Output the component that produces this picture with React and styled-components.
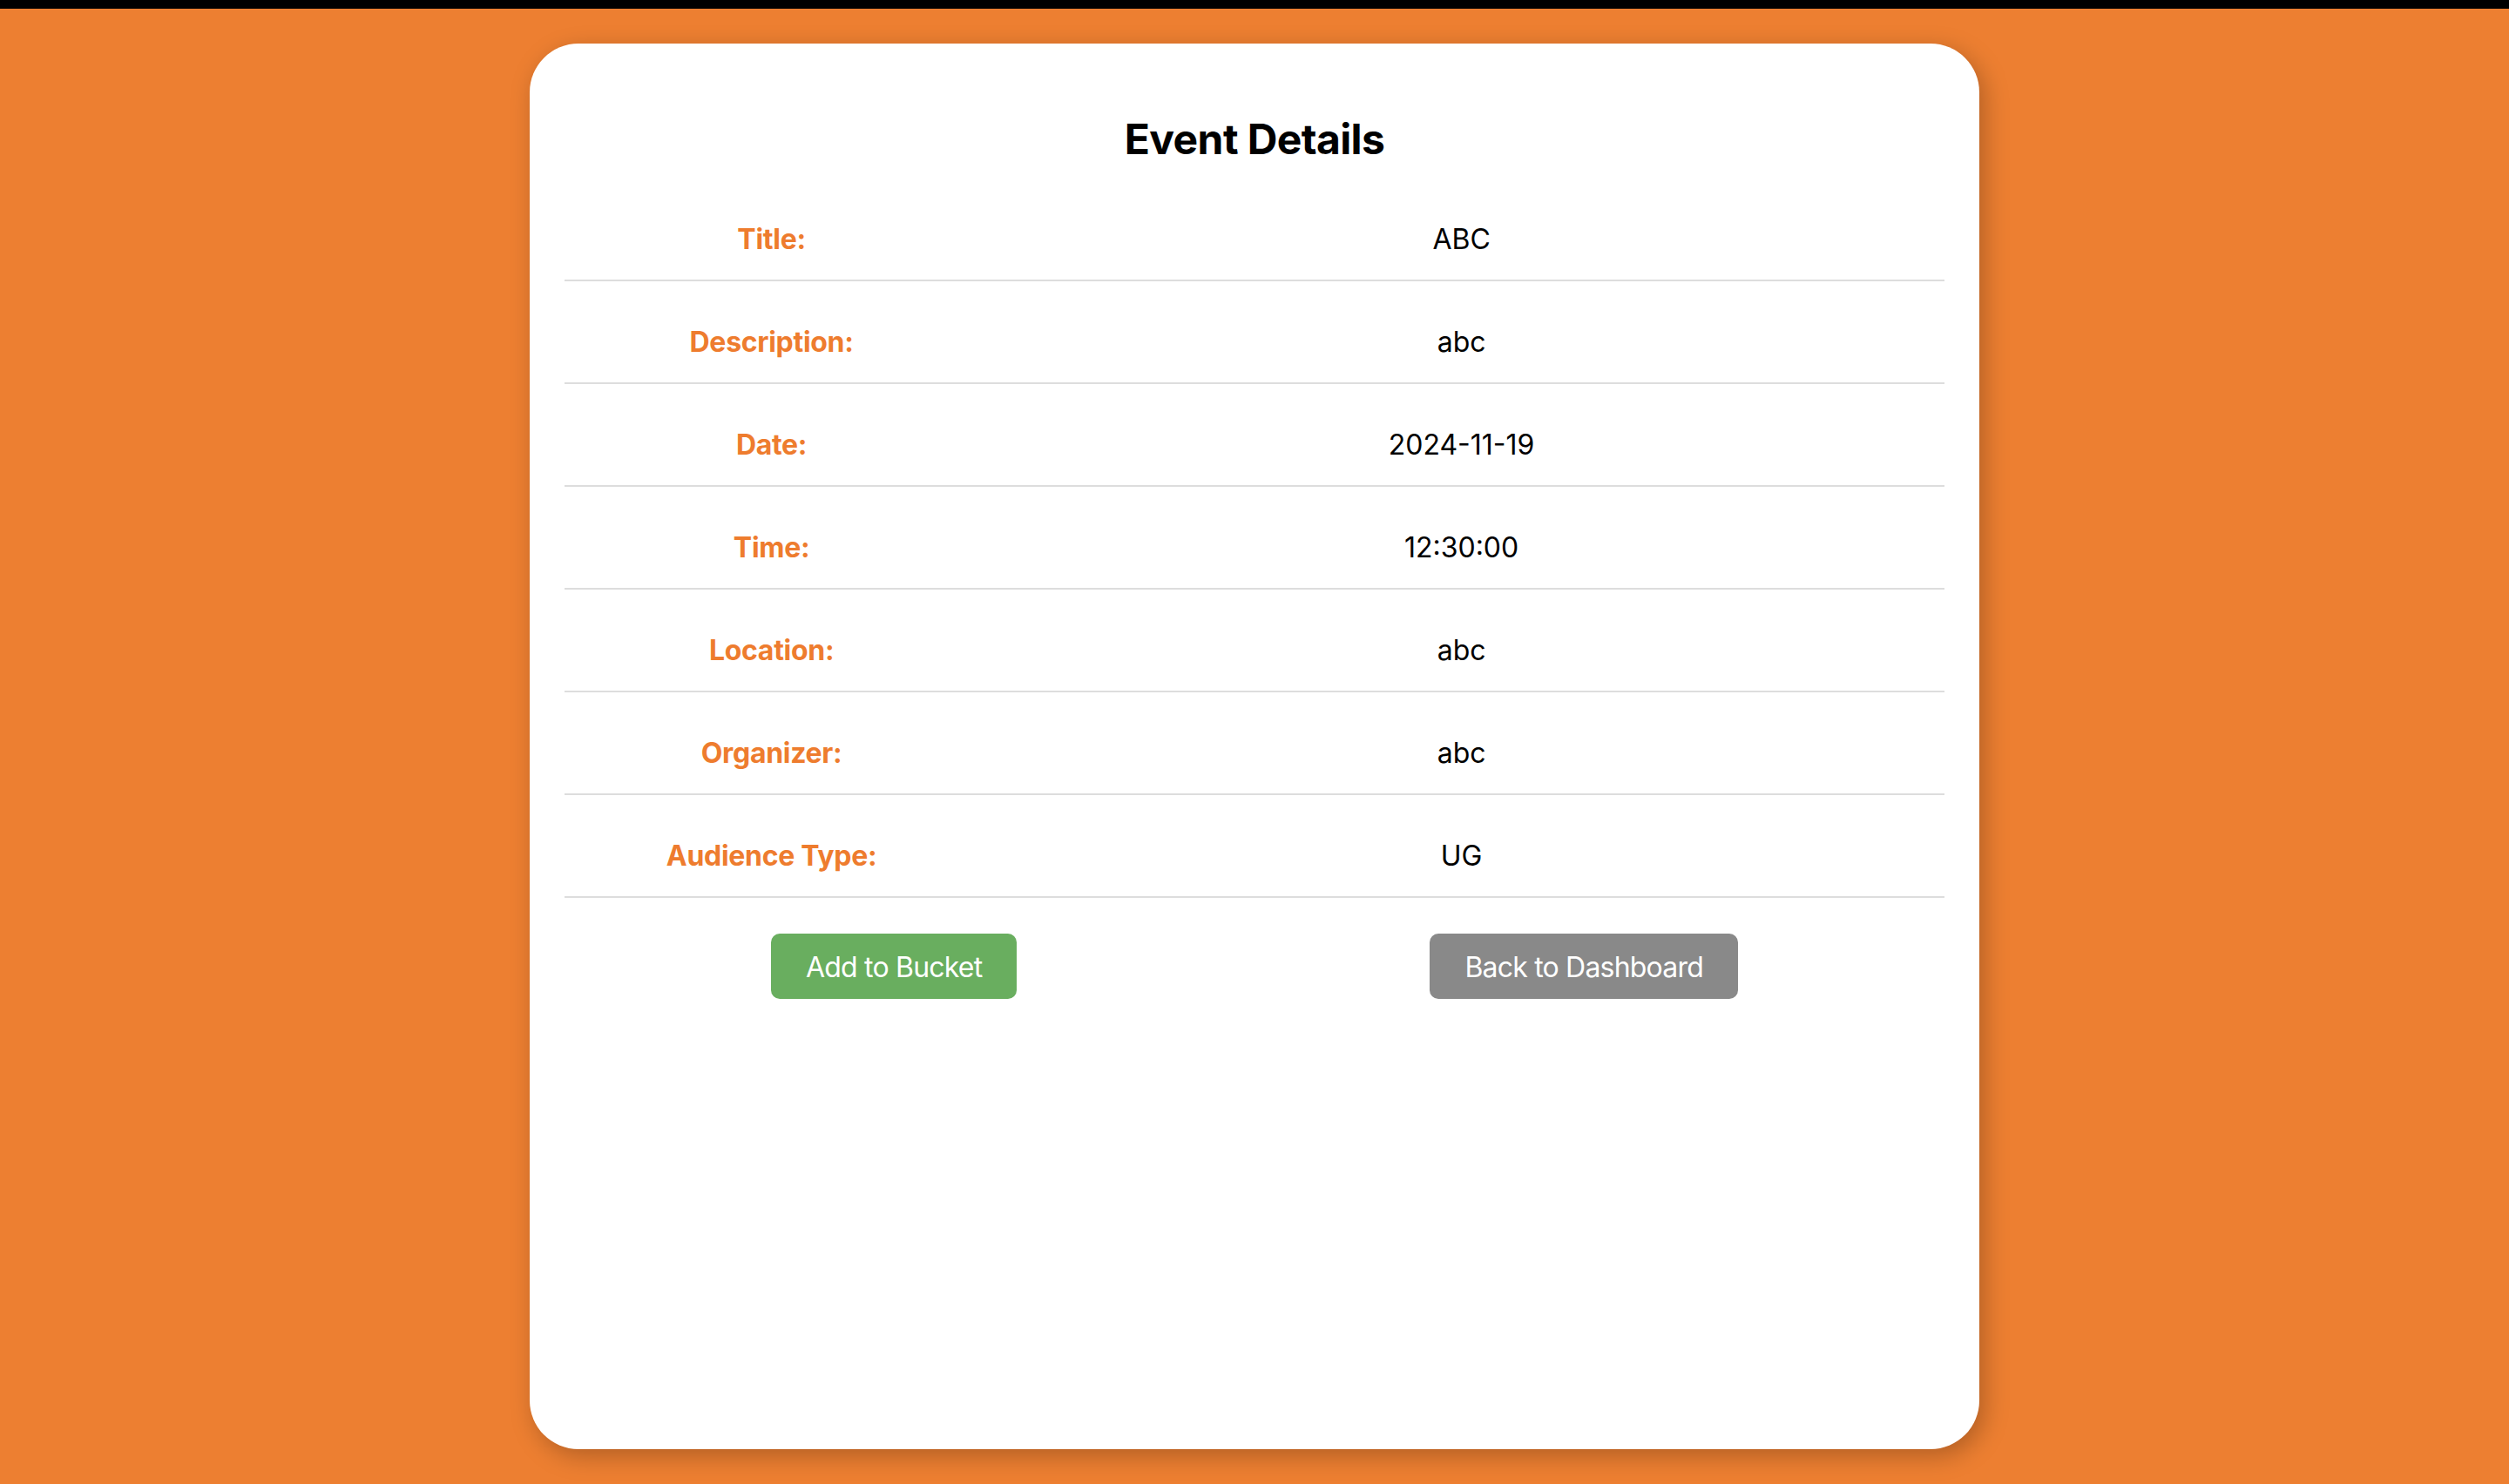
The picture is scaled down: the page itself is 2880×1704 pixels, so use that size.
import React from "react";
import styled, { createGlobalStyle } from "styled-components";

const GlobalStyle = createGlobalStyle`
  html, body {
    margin: 0;
    padding: 0;
    background-color: #ed7f31;
  }
  * {
    box-sizing: border-box;
  }
`;

export const TopBar = styled.div`
  height: 10px;
  background-color: #000;
`;

export const Page = styled.div`
  min-height: calc(100vh - 10px);
  padding: 40px 0;
  background-color: #ed7f31;
  font-family: Inter, "Noto Sans", "Liberation Sans", sans-serif;
`;

export const Card = styled.div`
  width: 1664px;
  height: 1614px;
  margin: 0 auto;
  padding: 40px;
  background-color: #ffffff;
  border-radius: 56px;
  box-shadow: 6px 8px 28px rgba(0, 0, 0, 0.25);
`;

export const Heading = styled.h2`
  margin: 41px 0 16px;
  font-size: 48px;
  line-height: 58px;
  font-weight: 700;
  letter-spacing: -0.6px;
  text-align: center;
  color: #000;
`;

export const Row = styled.div`
  display: grid;
  grid-template-columns: 30% 70%;
  padding: 51px 0 27px;
  border-bottom: 2px solid #dddddd;
  font-size: 32px;
  line-height: 38px;
`;

export const Label = styled.div`
  text-align: center;
  font-weight: 700;
  letter-spacing: -0.3px;
  color: #ee7c2e;
`;

export const Value = styled.div`
  text-align: center;
  color: #000;
`;

export const ButtonRow = styled.div`
  display: flex;
  justify-content: space-around;
  margin-top: 41px;
`;

export const ActionButton = styled.button`
  padding: 21px 40px 19px;
  font-family: inherit;
  font-size: 32px;
  line-height: 35px;
  letter-spacing: -0.8px;
  color: #ffffff;
  background-color: ${(props) => (props.$variant === "back" ? "#898989" : "#69ae5f")};
  border: none;
  border-radius: 10px;
  cursor: pointer;
`;

const details = [
  ["Title:", "ABC"],
  ["Description:", "abc"],
  ["Date:", "2024-11-19"],
  ["Time:", "12:30:00"],
  ["Location:", "abc"],
  ["Organizer:", "abc"],
  ["Audience Type:", "UG"],
];

export default function App() {
  return (
    <>
      <GlobalStyle />
      <TopBar />
      <Page>
        <Card>
          <Heading>Event Details</Heading>
          {details.map(([label, value]) => (
            <Row key={label}>
              <Label>{label}</Label>
              <Value>{value}</Value>
            </Row>
          ))}
          <ButtonRow>
            <ActionButton>Add to Bucket</ActionButton>
            <ActionButton $variant="back">Back to Dashboard</ActionButton>
          </ButtonRow>
        </Card>
      </Page>
    </>
  );
}
